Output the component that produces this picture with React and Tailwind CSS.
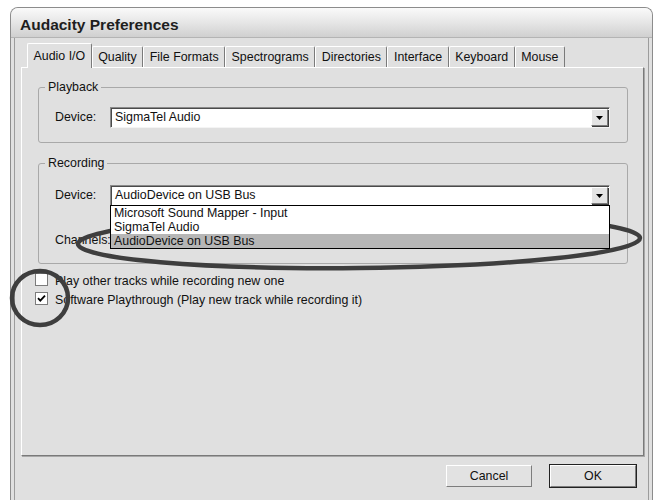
import React from 'react';

const TABS = ['Audio I/O', 'Quality', 'File Formats', 'Spectrograms', 'Directories', 'Interface', 'Keyboard', 'Mouse'];

function ArrowButton() {
  return (
    <div className="w-[17px] h-[17px] mt-px mr-px shrink-0 flex items-center justify-center bg-[#e4e4e4] border border-t-white border-l-white border-r-[#7a7a7a] border-b-[#7a7a7a] shadow-[1px_1px_0_#3c3c3c]">
      <svg width="7" height="4" viewBox="0 0 7 4">
        <path d="M0 0h7L3.5 4z" fill="#000" />
      </svg>
    </div>
  );
}

function Combo({ text, children }) {
  return (
    <div className="relative w-[500px] h-[21px] flex bg-white border border-t-[#8a8a8a] border-l-[#8a8a8a] border-r-[#f4f4f4] border-b-[#f4f4f4] shadow-[inset_1px_1px_0_#4a4a4a]">
      <div className="flex-1 pl-[4px] leading-[19px] truncate">{text}</div>
      <ArrowButton />
      {children}
    </div>
  );
}

function Group({ label, className = '', children }) {
  return (
    <fieldset className={`border border-[#a9a9a9] rounded-[3px] p-0 ${className}`}>
      <legend className="ml-[6px] px-[3px] leading-[14px]">{label}</legend>
      {children}
    </fieldset>
  );
}

function Checkbox({ checked, label }) {
  return (
    <div className="flex items-center gap-[7px] h-[13px]">
      <div className="w-[13px] h-[13px] bg-white border border-[#7c7c7c] flex items-center justify-center">
        {checked ? (
          <svg width="9" height="9" viewBox="0 0 9 9">
            <path d="M1 4.2l2.3 2.4L8 1.6" stroke="#000" strokeWidth="1.8" fill="none" />
          </svg>
        ) : null}
      </div>
      <span className="leading-[14px] pt-[2px]">{label}</span>
    </div>
  );
}

function Button({ label, isDefault }) {
  return (
    <div className={isDefault ? 'border border-[#222]' : 'border border-transparent'}>
      <div className="w-[86px] h-[22px] flex items-center justify-center bg-[#e2e2e2] border border-t-white border-l-white border-r-[#7d7d7d] border-b-[#7d7d7d]">
        {label}
      </div>
    </div>
  );
}

export default function App() {
  return (
    <div className="relative w-[657px] h-[504px] bg-white overflow-hidden pt-[7px] pl-[10px] font-['Liberation_Sans',Arial,sans-serif] text-[12.4px] text-[#111]">
      <div className="w-[643px] h-[493px] flex flex-col rounded-t-[8px] border border-b-0 border-[#8c8c8c] bg-[#e0e0e0] overflow-hidden">
        <div className="h-[30px] shrink-0 pl-[9px] pt-[8px] leading-[18px] text-[15.5px] font-bold text-[#1e1e1e] bg-linear-to-b from-[#fafafa] via-[#e6e6e6] to-[#d0d0d0] border-b border-[#b4b4b4]">
          Audacity Preferences
        </div>

        <div className="flex-1 flex flex-col mx-[3px] border-x border-[#9c9c9c]">
          <div className="flex items-end pt-[5px] pl-[12px]">
            {TABS.map((t, i) =>
              i === 0 ? (
                <div
                  key={t}
                  className="relative z-10 -mb-px h-[25px] px-[5.5px] pt-[5px] leading-[14px] bg-[#e0e0e0] border-t border-l border-r border-t-white border-l-white border-r-[#7a7a7a] rounded-t-[2px]"
                >
                  {t}
                </div>
              ) : (
                <div
                  key={t}
                  className="h-[21px] px-[5.5px] pt-[3px] leading-[14px] border-t border-l border-r border-t-white border-l-white border-r-[#7a7a7a] rounded-t-[2px]"
                >
                  {t}
                </div>
              )
            )}
          </div>

          <div className="ml-[6px] mr-[4px] h-[389px] pl-[16px] pr-[15px] pt-[12px] border border-t-white border-l-white border-r-[#7a7a7a] border-b-[#7a7a7a] shadow-[1px_1px_0_#a8a8a8]">
            <Group label="Playback">
              <div className="flex items-center pl-[16px] pt-[13px] pb-[14px]">
                <span className="w-[55px]">Device:</span>
                <Combo text="SigmaTel Audio" />
              </div>
            </Group>

            <Group label="Recording" className="mt-[13px]">
              <div className="pl-[16px] pt-[15px] pb-[12px]">
                <div className="relative z-20 flex items-center">
                  <span className="w-[55px]">Device:</span>
                  <Combo text="AudioDevice on USB Bus">
                    <div className="absolute left-[-1px] top-full w-[500px] bg-white border border-black">
                      <div className="h-[14px] leading-[14px] pl-[3px]">Microsoft Sound Mapper - Input</div>
                      <div className="h-[14px] leading-[14px] pl-[3px]">SigmaTel Audio</div>
                      <div className="h-[14px] leading-[14px] pl-[3px] bg-[#b6b6b6]">AudioDevice on USB Bus</div>
                    </div>
                  </Combo>
                </div>
                <div className="flex items-center mt-[24px] h-[21px]">
                  <span className="w-[55px]">Channels:</span>
                </div>
              </div>
            </Group>

            <div className="-ml-[3px] mt-[9px] flex flex-col gap-[6px]">
              <Checkbox label="Play other tracks while recording new one" />
              <Checkbox checked label="Software Playthrough (Play new track while recording it)" />
            </div>
          </div>

          <div className="flex justify-end gap-[16px] mt-[8px] pr-[11px]">
            <Button label="Cancel" />
            <Button label="OK" isDefault />
          </div>
        </div>
      </div>

      <svg className="absolute inset-0 pointer-events-none" width="657" height="504" viewBox="0 0 657 504">
        <ellipse cx="359" cy="241" rx="281" ry="27" transform="rotate(-0.6 359 241)" fill="none" stroke="#3e3e3e" strokeWidth="4.5" />
        <ellipse cx="40" cy="298" rx="28" ry="27" fill="none" stroke="#3e3e3e" strokeWidth="4.5" />
      </svg>
    </div>
  );
}
